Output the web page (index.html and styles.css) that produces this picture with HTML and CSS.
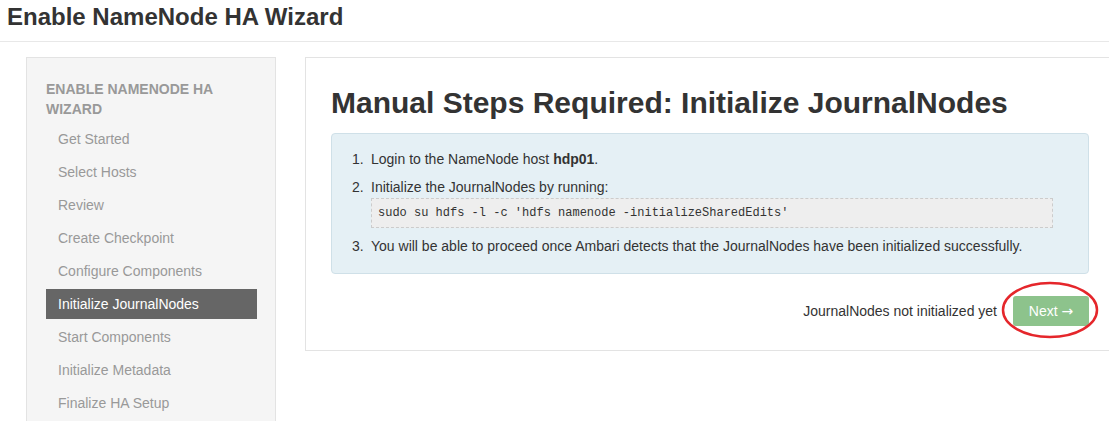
FILE: index.html
```html
<!DOCTYPE html>
<html>
<head>
<meta charset="utf-8">
<link rel="stylesheet" href="styles.css">
</head>
<body>
<div class="page-header">
  <h1 class="page-title">Enable NameNode HA Wizard</h1>
</div>
<div class="wizard">
  <div class="sidebar">
    <div class="sidebar-title">ENABLE NAMENODE HA WIZARD</div>
    <ul class="steps">
      <li class="step">Get Started</li>
      <li class="step">Select Hosts</li>
      <li class="step">Review</li>
      <li class="step">Create Checkpoint</li>
      <li class="step">Configure Components</li>
      <li class="step active">Initialize JournalNodes</li>
      <li class="step">Start Components</li>
      <li class="step">Initialize Metadata</li>
      <li class="step">Finalize HA Setup</li>
    </ul>
  </div>
  <div class="main">
    <h2 class="main-title">Manual Steps Required: Initialize JournalNodes</h2>
    <div class="alert">
      <ol class="instructions">
        <li>Login to the NameNode host <b>hdp01</b>.</li>
        <li>Initialize the JournalNodes by running:
          <div class="code">sudo su hdfs -l -c 'hdfs namenode -initializeSharedEdits'</div>
        </li>
        <li>You will be able to proceed once Ambari detects that the JournalNodes have been initialized successfully.</li>
      </ol>
    </div>
    <div class="footer">
      <span class="status">JournalNodes not initialized yet</span>
      <span class="btn-wrap">
        <button class="btn-next">Next <span class="arrow">&rarr;</span></button>
        <svg class="circle" width="100" height="60" viewBox="0 0 100 60">
          <ellipse cx="49" cy="29" rx="47" ry="27" fill="none" stroke="#e5262b" stroke-width="2.5"/>
        </svg>
      </span>
    </div>
  </div>
</div>
</body>
</html>
```

FILE: styles.css
```css
html, body {
  margin: 0;
  padding: 0;
  background: #fff;
  overflow: hidden;
}
body {
  font-family: "Liberation Sans", Arial, sans-serif;
  font-size: 14px;
  color: #333;
  width: 1109px;
  height: 421px;
}
.page-header {
  height: 41px;
  border-bottom: 1px solid #e8e8e8;
  padding-left: 7px;
}
.page-title {
  margin: 0;
  font-size: 24px;
  line-height: 34px;
  font-weight: bold;
  color: #333;
}
.wizard {
  display: flex;
  padding: 15px 0 0 26px;
  gap: 29px;
}
.sidebar {
  width: 250px;
  flex-shrink: 0;
  box-sizing: border-box;
  background: #f5f5f5;
  border: 1px solid #e3e3e3;
  border-bottom: none;
  padding: 21px 18px 0 19px;
  height: 364px;
}
.sidebar-title {
  font-size: 14px;
  font-weight: bold;
  color: #999;
  line-height: 20px;
  width: 170px;
}
.steps {
  list-style: none;
  margin: 5px 0 0;
  padding: 0;
}
.step {
  height: 30px;
  line-height: 30px;
  margin-bottom: 3px;
  padding-left: 12px;
  color: #999;
}
.step.active {
  background: #666;
  color: #fff;
}
.main {
  width: 820px;
  flex-shrink: 0;
  box-sizing: border-box;
  border: 1px solid #e3e3e3;
  padding: 25px 35px 24px 25px;
  align-self: flex-start;
}
.main-title {
  margin: 0 0 10px;
  font-size: 30px;
  line-height: 40px;
  font-weight: bold;
  color: #333;
}
.alert {
  background: #e5f0f5;
  border: 1px solid #cfe0e8;
  border-radius: 4px;
  padding: 15px 35px 17px 0;
}
.instructions {
  margin: 0;
  padding-left: 39px;
  list-style: none;
  counter-reset: step;
}
.instructions li {
  position: relative;
  line-height: 20px;
  margin-bottom: 8px;
  counter-increment: step;
}
.instructions li::before {
  content: counter(step) ".";
  position: absolute;
  left: -19px;
}
.instructions li:last-child {
  margin-bottom: 0;
}
.code {
  margin-top: 1px;
  background: #eee;
  border: 1px dashed #ccc;
  font-family: "Liberation Mono", "Courier New", monospace;
  font-size: 12px;
  height: 28px;
  line-height: 28px;
  padding: 0 6px;
}
.footer {
  display: flex;
  justify-content: flex-end;
  align-items: center;
  gap: 16px;
  margin-top: 22px;
}
.status {
  color: #333;
}
.btn-wrap {
  position: relative;
  display: inline-block;
}
.btn-next {
  display: block;
  width: 76px;
  height: 30px;
  border: none;
  border-radius: 3px;
  background: #8dc38c;
  color: #fff;
  font-family: "Liberation Sans", Arial, sans-serif;
  font-size: 14px;
  line-height: 30px;
  padding: 0 0 2px;
}
.arrow {
  font-family: "DejaVu Sans", sans-serif;
  font-size: 14px;
  line-height: 1;
}
.circle {
  position: absolute;
  left: -12px;
  top: -15px;
}
```
